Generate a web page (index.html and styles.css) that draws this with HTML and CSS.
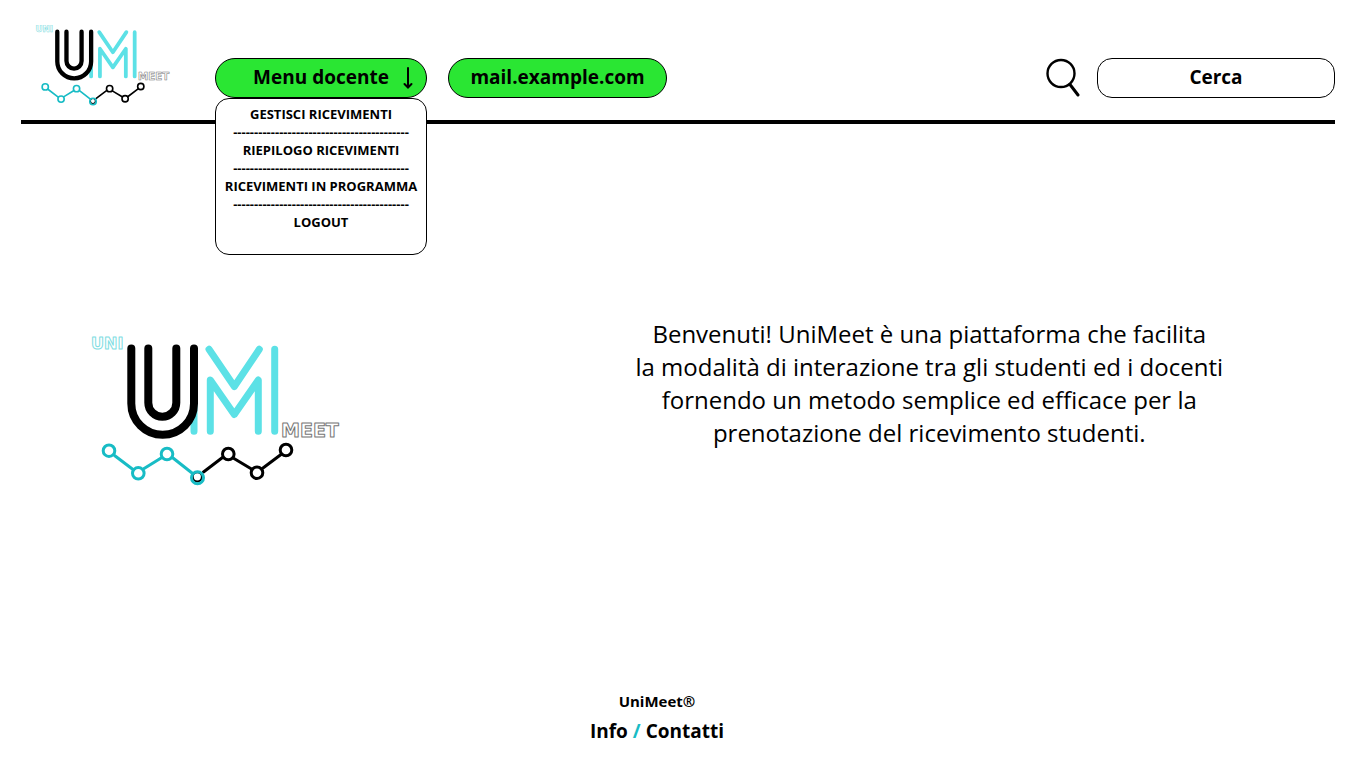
FILE: index.html
```html
<!DOCTYPE html>
<html lang="it">
<head>
<meta charset="utf-8">
<meta name="viewport" content="width=device-width, initial-scale=1">
<title>UniMeet</title>
<link rel="stylesheet" href="styles.css">
</head>
<body>
<header class="header">
  <a class="brand" href="#" aria-label="UniMeet">
    <svg class="logo logo-small" viewBox="0 0 252 151" aria-hidden="true">
      <g id="logo">
        <path class="logo-m" d="M104 62V95.300M120.300 95.300V44L144.300 78.500L168.300 44V95.300M119 13.300L144.300 50.500L169.300 13.300M184.700 13.300V95.300"/>
        <path class="logo-u" d="M41.300 12.500V67.500A31.300 31.300 0 0 0 104 67.500V12.500M58.300 12.500V66.800A14 14 0 0 0 86.300 66.800V12.500"/>
        <path class="chain chain-dark" d="M113.500 136L132.500 121.500M144 122.500L161.500 133M173 132L191 118.500"/>
        <path class="chain chain-teal" d="M24.500 119.500L43 133.500M53.700 132.800L71.500 121.800M83 122L102 137"/>
        <g class="node chain-dark">
          <circle cx="138.300" cy="118" r="5.800"/>
          <circle cx="167" cy="136.700" r="5.800"/>
          <circle cx="196" cy="114" r="5.800"/>
          <circle class="node-shade" cx="107.300" cy="140.800" r="4.600"/>
        </g>
        <g class="node chain-teal">
          <circle cx="19" cy="114.700" r="5.800"/>
          <circle cx="48.300" cy="137.300" r="5.800"/>
          <circle cx="77" cy="118" r="5.800"/>
          <circle cx="107.500" cy="141.700" r="6"/>
        </g>
        <text class="word word-uni" x="1" y="13">UNI</text>
        <text class="word word-meet" x="191" y="101">MEET</text>
      </g>
    </svg>
  </a>
  <nav class="nav">
    <div class="menu">
      <button class="pill" type="button" aria-haspopup="true" aria-expanded="true">Menu docente
        <svg class="arrow" viewBox="0 0 10 24" aria-hidden="true"><path d="M5 2V21M1.500 18L5 21.500L8.500 18"/></svg>
      </button>
      <div class="dropdown">
        <a href="#">GESTISCI RICEVIMENTI</a>
        <span>------------------------------------------</span>
        <a href="#">RIEPILOGO RICEVIMENTI</a>
        <span>------------------------------------------</span>
        <a href="#">RICEVIMENTI IN PROGRAMMA</a>
        <span>------------------------------------------</span>
        <a href="#">LOGOUT</a>
      </div>
    </div>
    <a class="pill pill-mail" href="#">mail.example.com</a>
  </nav>
  <form class="search">
    <label for="q" aria-label="Cerca">
      <svg class="lens" viewBox="0 0 34 40" aria-hidden="true"><circle cx="15" cy="15.500" r="13.500"/><path class="lens-handle" d="M24 26.500L32 37"/></svg>
    </label>
    <input id="q" class="search-box" type="text" placeholder="Cerca">
  </form>
</header>
<main class="main">
  <svg class="logo logo-large" viewBox="0 0 252 151" role="img" aria-label="UniMeet"><use href="#logo"/></svg>
  <p class="intro">Benvenuti! UniMeet è una piattaforma che facilita<br>la modalità di interazione tra gli studenti ed i docenti<br>fornendo un metodo semplice ed efficace per la<br>prenotazione del ricevimento studenti.</p>
</main>
<footer class="footer">
  <div class="copy">UniMeet®</div>
  <div class="links"><a href="#">Info</a> <span class="slash">/</span> <a href="#">Contatti</a></div>
</footer>
</body>
</html>
```
FILE: styles.css
```css
* { box-sizing: border-box; }
body {
  margin: 0;
  min-height: 100vh;
  display: flex;
  flex-direction: column;
  background: #fff;
  color: #000;
  font-family: "Open Sans", "Noto Sans", sans-serif;
}
a { color: inherit; text-decoration: none; }

.header {
  display: flex;
  align-items: flex-start;
  margin: 0 31px 0 21px;
  padding-top: 25px;
  height: 124px;
  border-bottom: 4px solid #000;
}
.brand { margin-left: 14px; }
.logo { display: block; fill: none; stroke-linecap: round; stroke-linejoin: round; }
.logo-small { width: 136px; }
.logo-large { width: 252px; flex: none; }
.logo-m { stroke: #5ce1e6; stroke-width: 7px; }
.logo-u { stroke: #000; stroke-width: 8px; }
.chain { stroke-width: 3px; }
.node { stroke-width: 3px; }
.node-shade { stroke-width: 2px; }
.chain-dark { stroke: #000; }
.chain-teal { stroke: #18bcc5; }
.word { font-family: "DejaVu Sans", sans-serif; font-weight: 700; stroke-width: 1px; }
.word-uni { font-size: 16px; stroke: #7fdde2; }
.word-meet { font-size: 19px; stroke: #777; }

.nav { display: flex; gap: 21px; margin: 33px 0 0 44px; }
.menu { position: relative; }
.pill {
  display: flex;
  align-items: center;
  justify-content: center;
  position: relative;
  width: 212px;
  height: 40px;
  padding: 0 0 2px;
  border: 1px solid #000;
  border-radius: 20px;
  background: #2ae633;
  color: #000;
  font-family: inherit;
  font-size: 19px;
  font-weight: 700;
}
.pill-mail { width: 219px; }
.arrow {
  position: absolute;
  right: 13px;
  top: 7px;
  width: 10px;
  height: 24px;
  fill: none;
  stroke: #000;
  stroke-width: 2px;
  stroke-linecap: round;
}
.dropdown {
  position: absolute;
  top: 100%;
  left: 0;
  width: 100%;
  padding: 6px 0 23px;
  border: 1px solid #000;
  border-radius: 14px;
  background: #fff;
  display: flex;
  flex-direction: column;
  align-items: center;
  font-size: 13px;
  font-weight: 700;
  line-height: 18px;
  white-space: nowrap;
}

.search { display: flex; align-items: flex-start; gap: 17px; margin: 33px 0 0 auto; }
.lens {
  display: block;
  width: 34px;
  height: 40px;
  fill: none;
  stroke: #000;
  stroke-width: 2.4px;
  stroke-linecap: round;
}
.lens-handle { stroke-width: 3px; }
.search-box {
  width: 238px;
  height: 40px;
  padding: 0 14px 2px;
  border: 1px solid #000;
  border-radius: 15px;
  background: #fff;
  font-family: inherit;
  font-size: 19px;
  font-weight: 700;
  text-align: center;
}
.search-box::placeholder { color: #000; opacity: 1; }

.main {
  flex: 1;
  display: flex;
  justify-content: space-between;
  align-items: flex-start;
  padding: 193px 143px 0 90px;
}
.logo-large { margin-top: 19px; }
.intro { margin: 0; font-size: 24px; line-height: 33px; text-align: center; }

.footer { margin-right: 52px; padding-bottom: 24px; text-align: center; font-weight: 700; }
.copy { font-size: 15px; line-height: 20px; margin-bottom: 7px; }
.links { font-size: 19px; line-height: 26px; }
.slash { color: #18bcc5; }
```
